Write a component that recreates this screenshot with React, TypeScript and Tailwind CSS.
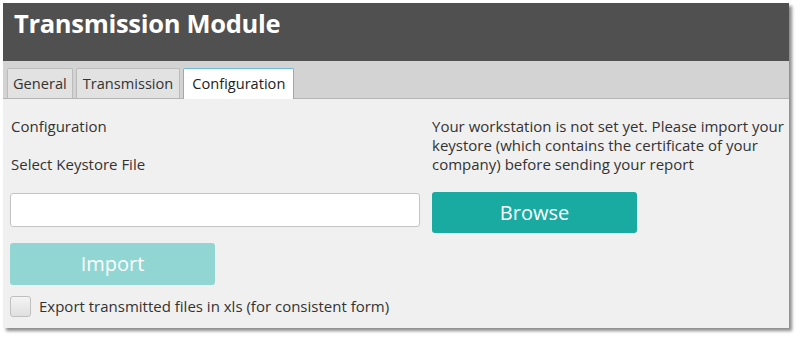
import React from "react";

export default function App() {
  return (
    <div className="w-[800px] h-[339px] bg-white pt-[3px] pl-[3px]" style={{ fontFamily: '"Open Sans", "Liberation Sans", sans-serif' }}>
      <div className="w-[786px] h-[325px] bg-[#f0f0f0] flex flex-col shadow-[3px_3px_3px_rgba(0,0,0,0.45)]">
        <div className="h-[58px] bg-[#505050] flex items-start pt-[8px] px-[11px]">
          <span className="text-white font-bold text-[25.5px] leading-none tracking-[-0.3px]">Transmission Module</span>
        </div>
        <div className="h-[38px] bg-[#d3d3d3] border-b border-[#b4b4b4] flex items-end pl-[4px] gap-[3px]">
          <div className="h-[30px] px-[5px] flex items-center bg-[#e2e2e2] border border-b-0 border-[#bcbcbc] rounded-t-[2px] text-[14.6px] text-[#333]">General</div>
          <div className="h-[30px] px-[6px] flex items-center bg-[#e2e2e2] border border-b-0 border-[#bcbcbc] rounded-t-[2px] text-[14.6px] text-[#333]">Transmission</div>
          <div className="h-[31px] -mb-px px-[8px] flex items-center bg-white border border-b-0 border-[#6db8e6] rounded-t-[2px] text-[14.6px] text-[#222]">Configuration</div>
        </div>
        <div className="flex pl-[7px] pt-[18px]">
          <div className="w-[410px] flex flex-col text-[15px] text-[#333]">
            <div className="leading-[19px] pl-[1px]">Configuration</div>
            <div className="leading-[19px] pl-[1px] mt-[19px]">Select Keystore File</div>
            <div className="mt-[19px] h-[34px] bg-white border border-[#c4c4c4] rounded-[3px]" />
            <div className="mt-[16px] w-[205px] h-[42px] bg-[#91d6d3] rounded-[3px] flex items-center justify-center text-white text-[20px]">Import</div>
            <div className="mt-[11px] flex items-center gap-[8px]">
              <div className="w-[21px] h-[21px] border border-[#c0c0c0] rounded-[3px] bg-gradient-to-b from-[#f4f4f4] to-[#e0e0e0]" />
              <span className="leading-[19px]">Export transmitted files in xls (for consistent form)</span>
            </div>
          </div>
          <div className="ml-[12px] w-[356px] flex flex-col text-[15px] text-[#333]">
            <div className="leading-[19px]">Your workstation is not set yet. Please import your keystore (which contains the certificate of your company) before sending your report</div>
            <div className="mt-[18px] w-[205px] h-[41px] bg-[#19aaa2] rounded-[3px] flex items-center justify-center text-white text-[20px]">Browse</div>
          </div>
        </div>
      </div>
    </div>
  );
}
